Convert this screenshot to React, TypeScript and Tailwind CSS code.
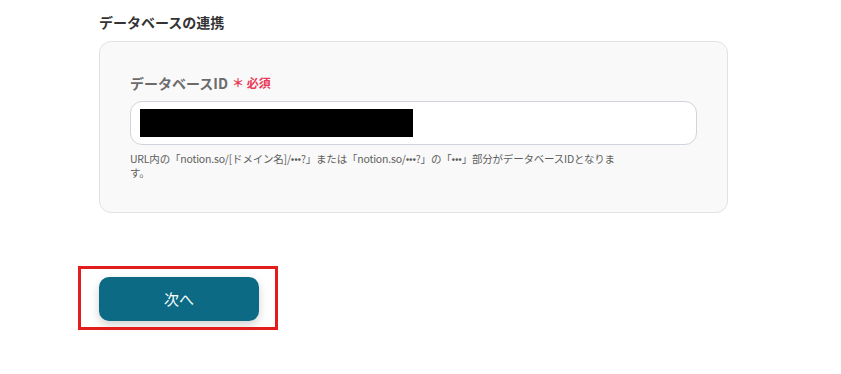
import React from 'react';

const App = () => {
  return (
    <div
      className="min-h-[374px] w-[841px] bg-white pl-[99px] pt-[12px]"
      style={{ fontFamily: '"Noto Sans CJK JP", "Noto Sans", sans-serif' }}
    >
      <h2 className="text-[14px] leading-[20px] font-bold text-[#333333]">データベースの連携</h2>

      <div className="mt-[9px] w-[629px] rounded-[12px] border border-[#e2e2e6] bg-[#f9f9f9] pt-[31px] pb-[32px] pl-[30px] pr-[30px]">
        <div className="flex items-center gap-[4px] text-[14px] leading-[20px] font-bold text-[#6b6b6b]">
          <span>データベースID</span>
          <span className="text-[12px] font-bold text-[#ea3a57]">＊ 必須</span>
        </div>

        <div className="mt-[8px] flex h-[44px] items-center rounded-[12px] border border-[#cfd3db] bg-white px-[9px]">
          <div className="h-[28px] w-[273px] bg-black" />
        </div>

        <p className="mt-[7px] text-[10.5px] leading-[14px] tracking-[-0.2px] text-[#5e5e5e]">
          <span className="whitespace-nowrap">
            URL内の「notion.so/[ドメイン名]/•••?」または「notion.so/•••?」の「•••」部分がデータベースIDとなりま
          </span>
          <br />
          す。
        </p>
      </div>

      <div className="relative mt-[64px] w-[160px]">
        <div className="pointer-events-none absolute -top-[11px] -left-[21px] h-[64px] w-[200px] border-[3px] border-[#e31c1c]" />
        <button className="flex h-[44px] w-[160px] items-center justify-center rounded-[10px] bg-[#0c6a84] text-[15px] text-white shadow-[0_4px_10px_rgba(0,0,0,0.18)]">
          次へ
        </button>
      </div>
    </div>
  );
};

export default App;
